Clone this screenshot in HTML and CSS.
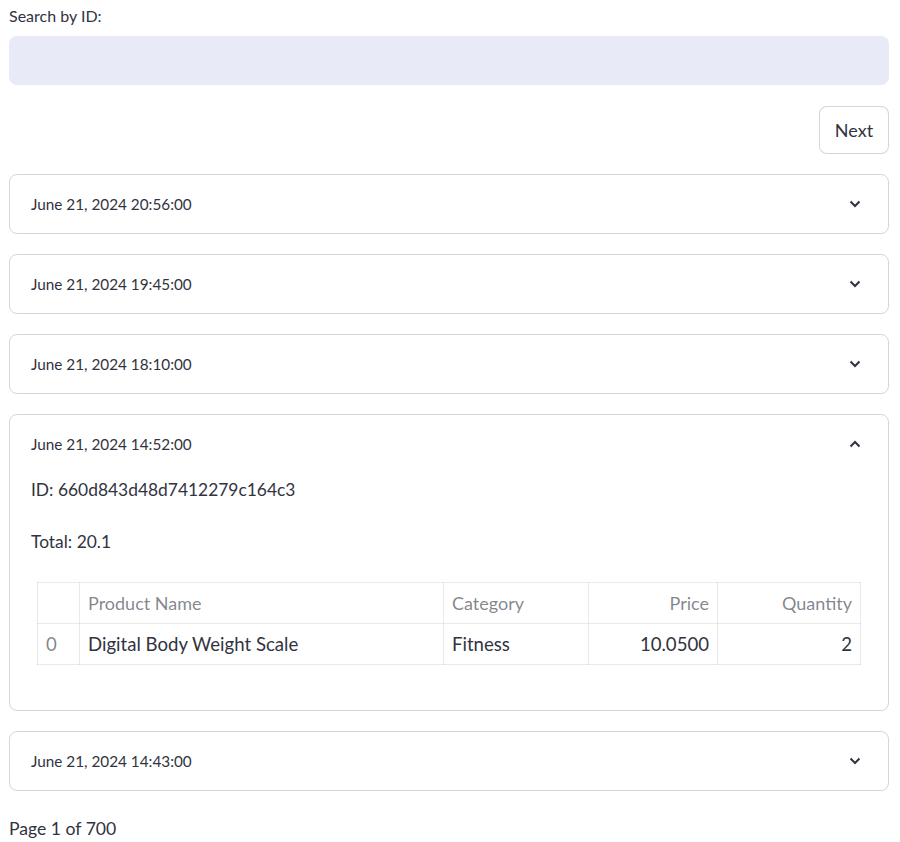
FILE: index.html
```html
<!DOCTYPE html>
<html>
<head>
<meta charset="utf-8">
<link rel="stylesheet" href="styles.css">
</head>
<body>
<div class="page">
  <label class="label">Search by ID:</label>
  <div class="input"></div>
  <div class="btn-row"><button class="btn">Next</button></div>

  <div class="exp"><div class="exp-head"><span>June 21, 2024 20:56:00</span><svg class="chev" viewBox="0 0 12 8"><polyline points="1.5,1.5 6,6 10.5,1.5"/></svg></div></div>
  <div class="exp"><div class="exp-head"><span>June 21, 2024 19:45:00</span><svg class="chev" viewBox="0 0 12 8"><polyline points="1.5,1.5 6,6 10.5,1.5"/></svg></div></div>
  <div class="exp"><div class="exp-head"><span>June 21, 2024 18:10:00</span><svg class="chev" viewBox="0 0 12 8"><polyline points="1.5,1.5 6,6 10.5,1.5"/></svg></div></div>
  <div class="exp open">
    <div class="exp-head"><span>June 21, 2024 14:52:00</span><svg class="chev" viewBox="0 0 12 8"><polyline points="1.5,6.5 6,2 10.5,6.5"/></svg></div>
    <div class="exp-body">
      <p class="line">ID: 660d843d48d7412279c164c3</p>
      <p class="line">Total: 20.1</p>
      <table class="tbl">
        <thead>
          <tr><th class="idx"></th><th class="c-name">Product Name</th><th class="c-cat">Category</th><th class="c-price num">Price</th><th class="c-qty num">Quantity</th></tr>
        </thead>
        <tbody>
          <tr><td class="idx">0</td><td>Digital Body Weight Scale</td><td>Fitness</td><td class="num">10.0500</td><td class="num">2</td></tr>
        </tbody>
      </table>
    </div>
  </div>
  <div class="exp"><div class="exp-head"><span>June 21, 2024 14:43:00</span><svg class="chev" viewBox="0 0 12 8"><polyline points="1.5,1.5 6,6 10.5,1.5"/></svg></div></div>

  <p class="pager">Page 1 of 700</p>
</div>
</body>
</html>
```
FILE: styles.css
```css
html, body { margin: 0; padding: 0; background: #fff; }
body {
  font-family: "Source Sans Pro", Lato, "Liberation Sans", sans-serif;
  color: rgb(49, 51, 63);
}
.page { padding: 0 11px 0 9px; }
.label { display: block; font-size: 16px; line-height: 20px; padding-top: 6px; height: 24px; }
.input {
  margin-top: 6px;
  height: 49px;
  background: #e8eaf8;
  border-radius: 8px;
}
.btn-row { display: flex; justify-content: flex-end; margin-top: 21px; }
.btn {
  font-family: inherit;
  font-size: 18px;
  color: rgb(49, 51, 63);
  background: #fff;
  border: 1px solid rgba(49, 51, 63, 0.2);
  border-radius: 8px;
  width: 70px;
  height: 48px;
  padding: 0;
}
.exp {
  margin-top: 20px;
  border: 1px solid rgba(49, 51, 63, 0.2);
  border-radius: 8px;
}
.exp-head {
  height: 58px;
  display: flex;
  align-items: center;
  justify-content: space-between;
  padding: 0 27px 0 21px;
  font-size: 15.3px;
}
.chev { width: 12px; height: 8px; fill: none; stroke: rgb(49, 51, 63); stroke-width: 2; margin-top: -1px; }
.exp-body { padding: 0 27px 45px 21px; }
.line { margin: 0; font-size: 17.4px; line-height: 26px; }
.line:first-child { margin-top: 4px; }
.line + .line { margin-top: 26px; }
.tbl {
  margin: 27px 0 0 6px;
  width: calc(100% - 6px);
  border-collapse: collapse;
  font-size: 18.6px;
  table-layout: fixed;
}
.tbl th, .tbl td {
  box-sizing: border-box;
  border: 1px solid rgba(49, 51, 63, 0.1);
  height: 41px;
  padding: 0 8px;
  text-align: left;
  font-weight: 400;
  white-space: nowrap;
}
.tbl th { color: rgba(49, 51, 63, 0.6); font-size: 18px; }
.tbl .num { text-align: right; }
.tbl td.idx, .tbl th.idx { width: 42px; color: rgba(49, 51, 63, 0.6); }
.c-name { width: 364px; }
.c-cat { width: 145px; }
.c-price { width: 129px; }
.c-qty { width: 143px; }
.pager { margin: 25px 0 0; font-size: 17.6px; line-height: 26px; }
```
